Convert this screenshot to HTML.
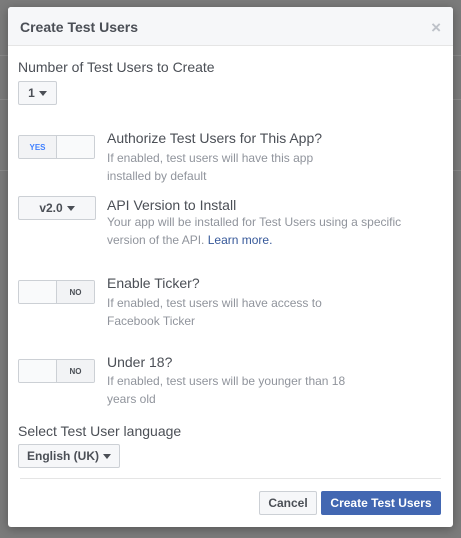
<!DOCTYPE html>
<html><head><style>
*{box-sizing:border-box;margin:0;padding:0}
body{width:461px;height:538px;background:#7b7b7b;font-family:"Liberation Sans",Helvetica,Arial,sans-serif;position:relative;overflow:hidden;color:#4b4f56}
.bgl{position:absolute;left:0;right:0;height:1px;background:#8a8a8a}
.dlg{position:absolute;left:8px;top:7px;width:445px;height:520px;background:#fff;border-radius:3px;overflow:hidden;box-shadow:0 2px 10px rgba(0,0,0,.3)}
.hd{height:39px;background:#f6f7f9;border-bottom:1px solid #e5e5e5;font-weight:bold;font-size:14px;color:#4b4f56;padding:12px 0 0 12px}
.x{position:absolute;right:12px;top:11px;color:#bec2c9;font-size:17px;font-weight:bold}
.a{position:absolute}
.lbl{font-size:14px;color:#4b4f56}
.desc{font-size:12px;color:#90949c;line-height:17.5px}
.btn{position:absolute;border:1px solid #ccd0d5;border-radius:2px;background:#f6f7f9;font-size:12px;font-weight:bold;color:#4b4f56;display:flex;align-items:center;justify-content:center}
.car{display:inline-block;width:0;height:0;border-left:4px solid transparent;border-right:4px solid transparent;border-top:5px solid #4b4f56;margin-left:4px}
.tg{position:absolute;width:77px;height:24px;border:1px solid #ccd0d5;border-radius:2px;background:#f6f7f9;display:flex;font-size:8px;font-weight:bold;overflow:hidden}
.tg span{flex:1;display:flex;align-items:center;justify-content:center}
</style></head><body>
<div class="bgl" style="top:55px"></div><div class="bgl" style="top:99px"></div><div class="bgl" style="top:170px"></div>
<div class="dlg">
<div class="hd">Create Test Users</div><div class="x">×</div>
<div class="a lbl" style="left:10px;top:52px">Number of Test Users to Create</div>
<div class="btn" style="left:10px;top:74px;width:39px;height:24px">1<i class="car"></i></div>

<div class="tg" style="left:10px;top:128px"><span style="color:#4080ff;background:#f2f3f5;border-right:1px solid #ccd0d5">YES</span><span style="background:#f9fafb"></span></div>
<div class="a lbl" style="left:99px;top:123px">Authorize Test Users for This App?</div>
<div class="a desc" style="left:99px;top:143px">If enabled, test users will have this app<br>installed by default</div>

<div class="btn" style="left:10px;top:189px;width:78px;height:24px">v2.0<i class="car"></i></div>
<div class="a lbl" style="left:99px;top:190px">API Version to Install</div>
<div class="a desc" style="left:99px;top:207px;color:#90949c">Your app will be installed for Test Users using a specific<br>version of the API. <span style="color:#365899">Learn more.</span></div>

<div class="tg" style="left:10px;top:273px"><span style="background:#f9fafb;border-right:1px solid #ccd0d5"></span><span style="color:#4b4f56;background:#f2f3f5">NO</span></div>
<div class="a lbl" style="left:99px;top:268px">Enable Ticker?</div>
<div class="a desc" style="left:99px;top:288px">If enabled, test users will have access to<br>Facebook Ticker</div>

<div class="tg" style="left:10px;top:352px"><span style="background:#f9fafb;border-right:1px solid #ccd0d5"></span><span style="color:#4b4f56;background:#f2f3f5">NO</span></div>
<div class="a lbl" style="left:99px;top:347px">Under 18?</div>
<div class="a desc" style="left:99px;top:366px">If enabled, test users will be younger than 18<br>years old</div>

<div class="a lbl" style="left:10px;top:416px">Select Test User language</div>
<div class="btn" style="left:10px;top:437px;width:102px;height:24px">English (UK)<i class="car"></i></div>
<div class="a" style="left:12px;top:471px;width:421px;height:1px;background:#e5e5e5"></div>
<div class="btn" style="left:251px;top:484px;width:58px;height:24px;background:#f6f7f9">Cancel</div>
<div class="btn" style="left:313px;top:484px;width:120px;height:24px;background:#4267b2;border-color:#4267b2;color:#fff">Create Test Users</div>
</div>
</body></html>
